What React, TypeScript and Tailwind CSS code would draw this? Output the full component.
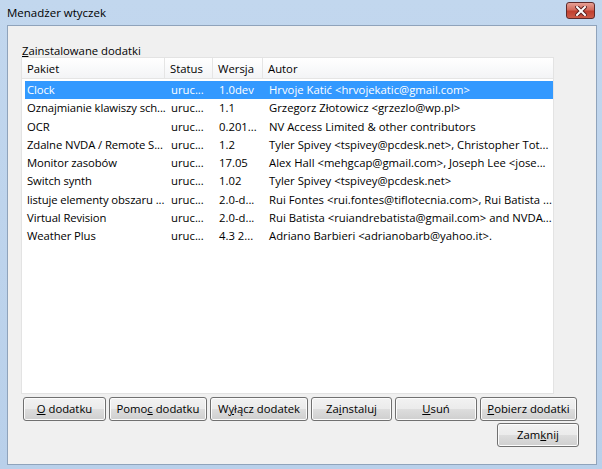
import React from 'react';

type Row = { name: string; status: string; version: string; author: string };

const rows: Row[] = [
  { name: 'Clock', status: 'uruc...', version: '1.0dev', author: 'Hrvoje Katić <hrvojekatic@gmail.com>' },
  { name: 'Oznajmianie klawiszy sch...', status: 'uruc...', version: '1.1', author: 'Grzegorz Złotowicz <grzezlo@wp.pl>' },
  { name: 'OCR', status: 'uruc...', version: '0.201...', author: 'NV Access Limited & other contributors' },
  { name: 'Zdalne NVDA / Remote S...', status: 'uruc...', version: '1.2', author: 'Tyler Spivey <tspivey@pcdesk.net>, Christopher Tot...' },
  { name: 'Monitor zasobów', status: 'uruc...', version: '17.05', author: 'Alex Hall <mehgcap@gmail.com>, Joseph Lee <jose...' },
  { name: 'Switch synth', status: 'uruc...', version: '1.02', author: 'Tyler Spivey <tspivey@pcdesk.net>' },
  { name: 'listuje elementy obszaru ...', status: 'uruc...', version: '2.0-d...', author: 'Rui Fontes <rui.fontes@tiflotecnia.com>, Rui Batista ...' },
  { name: 'Virtual Revision', status: 'uruc...', version: '2.0-d...', author: 'Rui Batista <ruiandrebatista@gmail.com> and NVDA...' },
  { name: 'Weather Plus', status: 'uruc...', version: '4.3 2...', author: 'Adriano Barbieri <adrianobarb@yahoo.it>.' },
];

// Windows 7 style push button
const Btn: React.FC<{ w: string; children: React.ReactNode }> = ({ w, children }) => (
  <div
    className={`${w} h-[24px] flex items-center justify-center rounded-[3px] border border-[#707070] bg-[linear-gradient(#f2f2f2_0%,#ebebeb_50%,#dddddd_51%,#cfcfcf_100%)] shadow-[inset_0_0_0_1px_#fcfcfc] text-black`}
  >
    <span className="whitespace-pre">{children}</span>
  </div>
);

export default function App() {
  return (
    <div
      className="w-[602px] h-[469px] flex flex-col bg-[linear-gradient(#c2d7ee,#b9d0ea)] text-[11.3px] text-black"
      style={{ fontFamily: '"Open Sans", "Noto Sans", sans-serif' }}
    >
      {/* Title bar */}
      <div className="h-[25px] flex items-center justify-between pl-[7px] pr-[7px]">
        <span className="text-[11.5px] mt-[1px]">Menadżer wtyczek</span>
        <div className="w-[29px] h-[17px] -mt-[4px] rounded-[3px] border border-[#5e2a2a] bg-[linear-gradient(#e6a095_0%,#d36b5c_45%,#c1402f_55%,#cc5b48_100%)] flex items-center justify-center">
          <svg width="12" height="10" viewBox="0 0 12 10">
            <path d="M2 1 L10 9 M10 1 L2 9" stroke="#5a2020" strokeWidth="4" strokeLinecap="square" />
            <path d="M2 1 L10 9 M10 1 L2 9" stroke="#ffffff" strokeWidth="2" strokeLinecap="square" />
          </svg>
        </div>
      </div>

      {/* Client area */}
      <div className="flex-1 ml-[7px] mr-[5px] mb-[4px] bg-[#f0f0f0] border border-[#8fa3bb] flex flex-col">
        <div className="mt-[16px] ml-[14px] h-[15px] leading-[17px]">
          <u>Z</u>ainstalowane dodatki
        </div>

        {/* List view */}
        <div className="ml-[13px] w-[533px] h-[337px] bg-white border border-[#e3e3e3]">
          <div className="grid grid-cols-[143px_48px_50px_1fr] h-[21px] bg-[linear-gradient(#ffffff,#f3f4f6)] border-b border-[#e5e5e5]">
            <div className="pl-[5px] leading-[21px] border-r border-[#e5e5e5]">Pakiet</div>
            <div className="pl-[5px] leading-[21px] border-r border-[#e5e5e5]">Status</div>
            <div className="pl-[5px] leading-[21px] border-r border-[#e5e5e5]">Wersja</div>
            <div className="pl-[5px] leading-[21px]">Autor</div>
          </div>
          <div className="pt-[2px]">
            {rows.map((r, i) => (
              <div
                key={r.name}
                className={`ml-[3px] grid grid-cols-[140px_48px_50px_1fr] h-[18.25px] leading-[18px] whitespace-nowrap ${
                  i === 0 ? 'bg-[#3399ff] text-white' : 'text-black'
                }`}
              >
                <div className="pl-[2px] tracking-[-0.1px]">{r.name}</div>
                <div className="pl-[6px]">{r.status}</div>
                <div className="pl-[6px]">{r.version}</div>
                <div className="pl-[6px]">{r.author}</div>
              </div>
            ))}
          </div>
        </div>

        {/* Buttons */}
        <div className="mt-[3px] ml-[15px] flex gap-[3px]">
          <Btn w="w-[83px]"><u>O</u> dodatku</Btn>
          <Btn w="w-[98px]">Pomo<u>c</u> dodatku</Btn>
          <Btn w="w-[98px]">W<u>y</u>łącz dodatek</Btn>
          <Btn w="w-[81px]">Za<u>i</u>nstaluj</Btn>
          <Btn w="w-[82px]"><u>U</u>suń</Btn>
          <Btn w="w-[97px]"><u>P</u>obierz dodatki</Btn>
        </div>
        <div className="mt-[2px] ml-[489px]">
          <Btn w="w-[82px]">Zam<u>k</u>nij</Btn>
        </div>
      </div>
    </div>
  );
}
